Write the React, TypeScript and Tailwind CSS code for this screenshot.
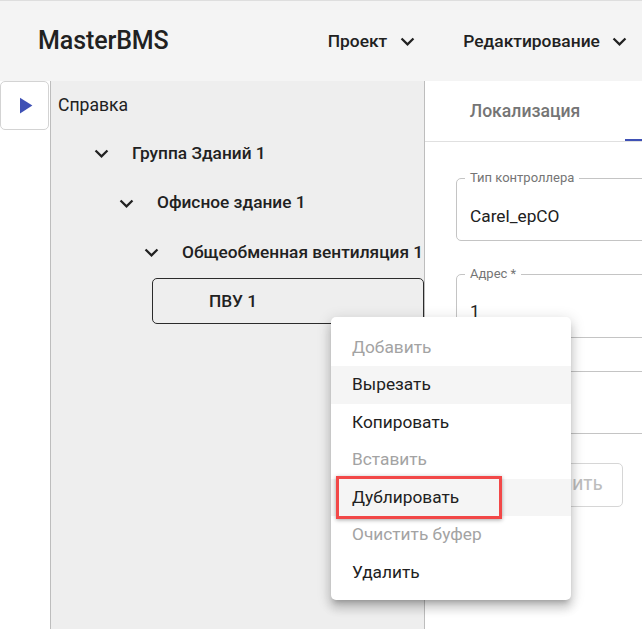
import React from "react"

const Chevron = ({ className = "" }: { className?: string }) => (
  <svg viewBox="0 0 24 24" className={className} fill="currentColor">
    <path d="M16.59 8.59 12 13.17 7.41 8.59 6 10l6 6 6-6z" />
  </svg>
)

const menuItems = [
  { label: "Добавить", disabled: true },
  { label: "Вырезать", active: true },
  { label: "Копировать" },
  { label: "Вставить", disabled: true },
  { label: "Дублировать", active: true },
  { label: "Очистить буфер", disabled: true },
  { label: "Удалить" },
]

const treeRows = [
  { label: "Группа Зданий 1", indent: "pl-[37px]" },
  { label: "Офисное здание 1", indent: "pl-[62px]" },
  { label: "Общеобменная вентиляция 1", indent: "pl-[87px]" },
]

export default function App() {
  return (
    <div className="relative w-[642px] h-[629px] overflow-hidden bg-white text-[#212121] font-['Roboto',sans-serif]">
      {/* Header */}
      <div className="h-[81px] bg-[#f4f4f4] border-t border-[#dedede] flex items-center">
        <div className="pl-[38px] text-[25px] font-medium tracking-[-0.1px]">MasterBMS</div>
        <div className="flex items-center ml-[159px] text-[17.4px] font-medium">
          <div className="flex items-center">
            <span>Проект</span>
            <Chevron className="w-[27px] h-[27px] ml-[7px]" />
          </div>
          <div className="flex items-center ml-[42px]">
            <span>Редактирование</span>
            <Chevron className="w-[27px] h-[27px] ml-[6px]" />
          </div>
        </div>
      </div>

      <div className="flex h-[548px]">
        {/* Left rail */}
        <div className="w-[50px] shrink-0">
          <button className="w-[49px] h-[49px] bg-white border border-[#d3d3d3] rounded-[5px] flex items-center justify-center">
            <svg viewBox="0 0 24 24" className="w-[27px] h-[27px] text-[#3f51b5]" fill="currentColor">
              <path d="M8 5v14l11-7z" />
            </svg>
          </button>
        </div>

        {/* Tree */}
        <div className="w-[375px] shrink-0 bg-[#eeeeee] border-l border-r border-[#bdbdbd] overflow-hidden whitespace-nowrap">
          <div className="h-[48px] flex items-center pl-[7px] text-[17.6px]">Справка</div>
          {treeRows.map((row) => (
            <div key={row.label} className={`h-[49.5px] flex items-center ${row.indent} text-[17.3px] font-medium`}>
              <Chevron className="w-[27px] h-[27px] shrink-0" />
              <span className="ml-[17px]">{row.label}</span>
            </div>
          ))}
          <div className="ml-[101px] h-[46px] border border-[#2b2b2b] rounded-[5px] flex items-center pl-[56px] pt-[2px] text-[17.3px] font-medium">
            ПВУ 1
          </div>
        </div>

        {/* Right panel */}
        <div className="flex-1 overflow-hidden">
          <div className="h-[61px] border-b border-[#e0e0e0] flex whitespace-nowrap">
            <div className="w-[200px] shrink-0 flex items-center justify-center text-[17.6px] font-medium text-[#757575]">
              Локализация
            </div>
            <div className="w-[200px] shrink-0 border-b-2 border-[#3f51b5]" />
          </div>

          <div className="pl-[31px] pt-[36px] flex flex-col">
            <div className="relative w-[400px] h-[63px] border border-[#c4c4c4] rounded-[5px] pl-[13px] pt-[25px] text-[17.3px] leading-[24px]">
              <span className="absolute left-[8px] top-[-9px] px-[5px] bg-white text-[13px] leading-[16px] text-[#757575]">
                Тип контроллера
              </span>
              Carel_epCO
            </div>
            <div className="relative mt-[33px] w-[400px] h-[64px] border border-[#c4c4c4] rounded-[5px] pl-[13px] pt-[24px] text-[17.3px] leading-[24px]">
              <span className="absolute left-[8px] top-[-9px] px-[5px] bg-white text-[13px] leading-[16px] text-[#757575]">
                Адрес *
              </span>
              1
            </div>
            <div className="mt-[33px] w-[400px] h-[63px] border border-[#c4c4c4] rounded-[5px]" />
            <button className="mt-[29px] ml-[18px] w-[149px] h-[44px] border border-[#d6d6d6] rounded-[5px] flex items-center justify-end pr-[19px] text-[15px] font-medium tracking-[0.5px] text-[#bdbdbd]">
              СОХРАНИТЬ
            </button>
          </div>
        </div>
      </div>

      {/* Context menu */}
      <div className="absolute left-[331px] top-[317px] w-[240px] pt-[11.5px] pb-[9px] bg-white rounded-[5px] shadow-[0_5px_5px_-3px_rgba(0,0,0,0.2),0_8px_10px_1px_rgba(0,0,0,0.14),0_3px_14px_2px_rgba(0,0,0,0.12)]">
        {menuItems.map((item) => (
          <div
            key={item.label}
            className={`h-[37.5px] flex items-center pl-[21px] pt-[1px] text-[17.3px] ${item.active ? "bg-[#f5f5f5]" : ""} ${item.disabled ? "text-[#a3a3a3]" : "text-[#212121]"}`}
          >
            {item.label}
          </div>
        ))}
      </div>

      {/* Highlight annotation */}
      <div className="absolute left-[336px] top-[476px] w-[166px] h-[43px] border-[3px] border-[#f24848] shadow-[0_1px_4px_rgba(0,0,0,0.35)]" />
    </div>
  )
}
